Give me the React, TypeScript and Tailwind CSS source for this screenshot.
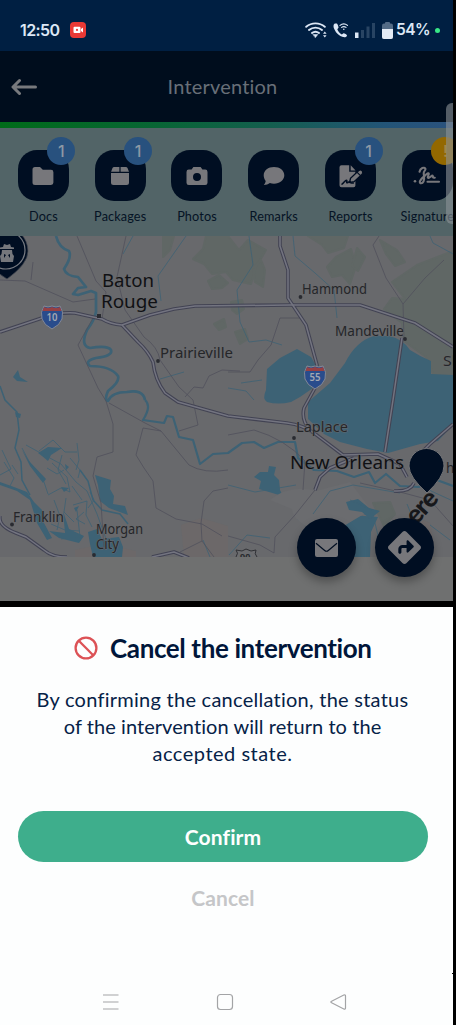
import React from "react";
import { FaDiamondTurnRight } from "react-icons/fa6";

const outfit = "font-[Lato,'Liberation_Sans',sans-serif]";

function StatusBar() {
  return (
    <div className="flex h-[51px] shrink-0 items-center bg-[#001f42] pt-[9px] text-[#dce7f5]">
      <div className="ml-[20px] w-[50px] font-[Inter,sans-serif] text-[16px] leading-[20px] font-semibold tracking-[-0.6px] whitespace-nowrap">12:50</div>
      <svg className="h-4 w-4" viewBox="0 0 16 16">
        <rect width="16" height="16" rx="4" fill="#e93935" />
        <rect x="3.5" y="4.7" width="7" height="6.4" rx="1" fill="#fff" />
        <path d="M11 7l2-1.6v5L11 8.9z" fill="#fff" />
        <circle cx="7" cy="7.9" r="1.1" fill="#e93935" />
      </svg>
      <svg className="ml-[219px] h-[18px] w-[71px]" viewBox="0 0 71 18" fill="none" stroke="#dce7f5" strokeWidth="1.9" strokeLinecap="round">
        <path d="M1.2 5.8c5.4-4.6 13.2-4.6 18.6 0M4 9c3.8-3.2 9.2-3.2 13 0M7 12c2.1-1.6 4.9-1.6 7 0" />
        <path d="M8.2 13.5h4.6l-2.3 3z" fill="#dce7f5" strokeWidth=".5" />
        <path d="M18 12.8l1.8-2.3 1.8 2.3zM18 14.2l1.8 2.3 1.8-2.3z" fill="#dce7f5" stroke="none" />
        <path d="M29.8 2.4c-1.8 1-1.6 3.4-.3 6.2 1.7 3.8 4.8 6.5 8.5 7.5 2.3.5 3.8-.4 4-1.7 0-.7-2.8-2.3-3.5-2.1l-1.7 1.2c-2-.9-3.8-3-4.5-5.2l1.2-1.5c.3-.8-1-4.1-1.7-4.4z" fill="#dce7f5" stroke="none" />
        <path d="M35 4.4c2.4-2.1 5.1-2.1 7.5 0M36.6 6.4c1.4-1.1 3-1.1 4.4 0" strokeWidth="1.2" />
        <circle cx="38.8" cy="8.2" r=".8" fill="#dce7f5" stroke="none" />
        <g stroke="none">
          <path d="M50 11.5h3.5V17H50z" fill="#dce7f5" />
          <path d="M56 9h3v8h-3zM61.5 5.5h3V17h-3zM67 2h3v15h-3z" fill="#284463" />
        </g>
      </svg>
      <svg className="ml-[6px] h-[17px] w-[11px]" viewBox="0 0 11 17">
        <rect x="3" width="5" height="4" rx="1" fill="#536b86" />
        <rect y="1.5" width="11" height="15.5" rx="2" fill="#536b86" />
        <path d="M0 7h11v8a2 2 0 01-2 2H2a2 2 0 01-2-2z" fill="#e3eaf4" />
      </svg>
      <div className="ml-[3px] w-[39px] font-[Inter,sans-serif] text-[15.5px] leading-[20px] font-semibold tracking-[-0.5px]">54%</div>
      <div className="h-[5px] w-[5px] rounded-full bg-[#38e886]" />
    </div>
  );
}

function Header() {
  return (
    <div className="grid h-[71px] shrink-0 grid-cols-[60px_1fr_68px] items-center bg-[#000d1d]">
      <svg className="ml-[11px] h-[18px] w-[27px]" viewBox="0 0 27 18" fill="none" stroke="#77797d" strokeWidth="3" strokeLinecap="round" strokeLinejoin="round">
        <path d="M24.5 9H2.5M8.5 2.5L2 9l6.5 6.5" />
      </svg>
      <div className={`${outfit} -mt-[2px] text-center text-[20px] tracking-[0.2px] text-[#686f78]`}>Intervention</div>
    </div>
  );
}

const glyph = "#77777b";

function FolderIcon() {
  return <svg className="h-6 w-6" viewBox="0 0 24 24"><path d="M1.5 5.5a2.5 2.5 0 012.5-2.5h5l2.8 2.8H20a2.4 2.4 0 012.4 2.4v10.4A2.4 2.4 0 0120 21H4a2.5 2.5 0 01-2.5-2.5z" fill={glyph} /></svg>;
}
function PackageIcon() {
  return <svg className="h-6 w-6" viewBox="0 0 24 24" fill={glyph}><path d="M6.2 3h5.2v4.8H3.1L4.5 4c.3-.7.9-1 1.7-1zM12.6 3h5.2c.8 0 1.4.3 1.7 1l1.5 3.8h-8.4zM3 9h18v9.5a2.5 2.5 0 01-2.5 2.5h-13A2.5 2.5 0 013 18.5z" /></svg>;
}
function CameraIcon() {
  return <svg className="h-6 w-6" viewBox="0 0 24 24"><path fillRule="evenodd" d="M8.4 3h7.2l1.8 2.6h2.8a2.3 2.3 0 012.3 2.3v10.8a2.3 2.3 0 01-2.3 2.3H3.8a2.3 2.3 0 01-2.3-2.3V7.9a2.3 2.3 0 012.3-2.3h2.8zM12 9.1a4 4 0 100 8 4 4 0 000-8z" fill={glyph} /></svg>;
}
function CommentIcon() {
  return <svg className="h-6 w-6" viewBox="0 0 24 24"><path d="M12 3c5.8 0 10.3 3.5 10.3 8.3s-4.5 8.4-10.3 8.4c-1.5 0-2.9-.2-4.1-.7-1.7 1.3-4.1 2.1-6.1 2 .9-1 1.6-2.4 1.9-4.1-1.3-1.5-2-3.4-2-5.6C1.7 6.5 6.2 3 12 3z" fill={glyph} /></svg>;
}
function ReportIcon() {
  return (
    <svg className="h-6 w-7" viewBox="0 0 28 24">
      <path d="M4.5 1.3h7.7v6.5h6.2v13.6a1.8 1.8 0 01-1.8 1.8H4.5a2 2 0 01-2-2V3.3a2 2 0 012-2z" fill={glyph} />
      <path d="M13.7 1.3l4.9 5.1h-4.9z" fill={glyph} />
      <path d="M12.6 18.5l.9-4.2 8-7.6q2-1.5 3.6 0 1.4 1.8 0 3.5l-8 7.5z" fill={glyph} stroke="#000e22" strokeWidth="1.3" />
      <path d="M19.9 8.1l3.6 3.6" stroke="#000e22" strokeWidth="1.2" />
      <path d="M5 20.2c1.7-1.1 3.2-4 4.4-4 1.3 0-.7 3 1 2.5l2-1c1.1-.5.6 1.4 2 1.4h2" fill="none" stroke="#000e22" strokeWidth="1.5" strokeLinecap="round" />
    </svg>
  );
}
function SignatureIcon() {
  return (
    <svg className="h-6 w-7" viewBox="0 0 28 24" fill="none" stroke={glyph} strokeWidth="2.1" strokeLinecap="round">
      <path d="M6.5 7.7c.7-3.5 4.9-5.2 5.9-3 .6 1.8-1.9 2-1.7 4.8.2 2.6 1.2 5.2-.2 8-1.2 2.3-3.8 2.4-3.7.4.2-2.8 4.6-5.4 7-8 1.2-1.1 2.5-.7 1.8.7-.8 1.8-1.4 3.8.2 3.3l3-2.1c1-.5 1.2.6 1.2 1.4.2.7 1 .6 1.8.5M14.5 17.8H26" />
      <circle cx="2" cy="17.2" r="1.3" fill={glyph} stroke="none" />
    </svg>
  );
}

const actions = [
  { label: "Docs", badge: "1", Icon: FolderIcon },
  { label: "Packages", badge: "1", Icon: PackageIcon },
  { label: "Photos", badge: "", Icon: CameraIcon },
  { label: "Remarks", badge: "", Icon: CommentIcon },
  { label: "Reports", badge: "1", Icon: ReportIcon },
  { label: "Signature", badge: "!", Icon: SignatureIcon },
];

function ActionBar() {
  return (
    <div className="relative h-[108px] shrink-0 overflow-hidden bg-[#526467]">
      <div className="ml-[5px] flex w-[462px] pt-[22px]">
        {actions.map(({ label, badge, Icon }) => (
          <div key={label} className="flex w-[76.8px] shrink-0 flex-col items-center">
            <div className="relative flex h-[51px] w-[51px] items-center justify-center rounded-[19px] bg-[#000e22]">
              <Icon />
              {badge && (
                <div className={`absolute top-[-13px] left-[29.5px] flex h-7 w-7 items-center justify-center rounded-full font-[Inter,sans-serif] text-[16px] font-medium ${badge === "!" ? "bg-[#936800] text-[#a08848]" : "bg-[#28517e] text-[#8c98a5]"}`}>{badge}</div>
              )}
            </div>
            <div className={`${outfit} mt-[6px] text-[12.7px] leading-[18px] tracking-[0.12px] whitespace-nowrap text-[#051325]`}>{label}</div>
          </div>
        ))}
      </div>
    </div>
  );
}

const highways = [
  "M0 332L42 318Q57 312 75 313L102 319Q110 324 122 325L150 315L174 309L195 306L290 305H360L415 323L453 347",
  "M122 325L138 342Q148 351 153 362Q155 380 165 393L178 402L228 416L287 423Q303 425 314 433L343 455L378 454L400 464L407 477",
  "M280 236V246L288 270V298L306 325L317 365L315 388L304 408Q301 420 310 430",
  "M402 338L393 400L385 452",
  "M0 516Q-2 526 16 533L26 537L44 550Q52 557 67 557M152 557L174 552L189 558M315 490L320 477L330 468L354 458M453 424L430 444L412 462M394 491Q410 492 414 483",
];
const minor = [
  "M77 236L96 281L106 292L102 319M126 236L117 277L125 310L144 337Q158 347 160 360L179 387L193 400L198 425L179 431",
  "M0 280L25 281L73 302L95 299M93 318L78 345L98 388L106 401L113 424L113 452L97 457L93 476L101 503L104 550M109 403L145 423L161 431L189 465Q204 474 228 470",
  "M161 431L143 428L136 455L144 468L153 481L156 508L176 519L202 524L222 536M228 488L213 491L204 501L201 523L202 541L214 557M202 541L180 552",
  "M228 372H250L258 360L271 345L280 318L300 318M404 339L403 304L386 278L373 245L379 236M403 304L425 278L444 260",
  "M228 536L260 545L274 553L275 537L295 515L315 490M228 435L254 430Q285 439 305 461L303 490M453 526L430 500L400 492L360 483",
  "M185 397L194 387L203 388L209 376L222 370L240 371M31 280L33 262",
];
const streams = [
  "M249 236L253 265L237 290L240 322L249 342L266 340L282 345M293 236L295 256L315 273L334 290L337 318",
  "M22 448L31 465L44 482L48 494",
  "M26 445L46 456L61 464L76 482L87 491L97 514L110 550",
  "M39 451L53 440L65 452L77 452M52 463L67 477L70 492L61 488L48 495M73 505L87 501L86 515L92 527M51 524L65 530L80 531M77 510L80 537L61 539M2 450L11 469L0 475M12 465L18 474",
  "M62 455L58 470L66 484M70 458L80 470L78 478M54 500L60 516L57 530M66 498L64 512L74 522M84 512L76 519L85 524M72 486L82 500M47 468L57 474L64 470M77 443L79 460L76 470M4 462L14 478L10 486M88 508L94 500L90 492",
  "M186 236L158 276L161 301M133 236L123 254M184 372L160 379M430 236L433 243L455 255M203 540L210 557M228 485L255 492L296 485M313 514L330 491L353 485L400 493",
  "M229 555L247 535L270 538M418 474L431 491L453 501M350 500L372 510L379 540M407 504L416 526L423 556M430 525L450 540M241 383L262 380M228 388L246 391L254 400",
];

const labels = [
  { x: 102, y: 287, w: 52, size: 18.5, text: "Baton", ink: "#101114" },
  { x: 101, y: 308, w: 57, size: 18.5, text: "Rouge", ink: "#101114" },
  { x: 160, y: 358, w: 73, size: 13.5, text: "Prairieville", ink: "#252629" },
  { x: 302, y: 294, w: 65, size: 13.5, text: "Hammond", ink: "#252629" },
  { x: 335, y: 336, w: 69, size: 13.5, text: "Mandeville", ink: "#252629" },
  { x: 443, y: 366, w: 17, size: 14, text: "Sli", ink: "#252629" },
  { x: 296, y: 432, w: 52, size: 13.5, text: "Laplace", ink: "#252629" },
  { x: 290, y: 469, w: 114, size: 18, text: "New Orleans", ink: "#101114" },
  { x: 446, y: 473, w: 16, size: 13.5, text: "ha", ink: "#252629" },
  { x: 13, y: 522, w: 51, size: 13.5, text: "Franklin", ink: "#252629" },
  { x: 96, y: 534, w: 47, size: 13.5, text: "Morgan", ink: "#252629" },
  { x: 96, y: 549, w: 23, size: 13.5, text: "City", ink: "#252629" },
];

function Shield({ x, y, text }: { x: number; y: number; text: string }) {
  return (
    <g transform={`translate(${x} ${y})`}>
      <path d="M-8-11Q-4-9 0-11Q4-9 8-11Q12-5 10 2Q8 8 0 12Q-8 8-10 2Q-12-5-8-11Z" fill="#294c8c" stroke="#868a95" />
      <path d="M-8-10Q-4-8 0-10Q4-8 8-10L9.5-6H-9.5Z" fill="#964044" />
      <text y="4.2" textAnchor="middle" textLength="11" lengthAdjust="spacingAndGlyphs" fontFamily="Noto Sans" fontWeight="600" fontSize="10" fill="#a2a8b3">{text}</text>
    </g>
  );
}

function MapView() {
  return (
    <svg className="block h-[321px] w-[453px]" viewBox="0 236 453 321">
      <rect y="236" width="453" height="321" fill="#68696c" />
      <g fill="#5b6661" stroke="#5b6661" strokeWidth="2" strokeLinejoin="round" opacity=".6">
        <path d="M163 236h11l-4 14-7 7zM206 236h22l11 14 9-10 18 10-10 17-5 17-18-4-7-8-14 2-8-10-11-5 10-10zM208 281l11-6 9 8-6 5-10 1zM231 302l11-2 2 9-7 5-5-4zM214 324l10-5 2 8-7 3zM308 236h40l-4 12-16 5-6-8zM336 257l15-8 5 17-6 18-8-9-10 2-5-10zM380 240l17 10 8 12-10 4-9-12zM253 268l8-8 4 10-2 17-8-5zM235 332l10-3 3 10-8 5z" />
        <path d="M392 282l25-17 36-14v123h-20l-7-17-22-16-2-18-18-14 8-11 13 1zM373 503l17-1 5 12-11 12zM357 248l8 9-7 14-6-5z" />
      </g>
      <g fill="#706866" opacity=".5">
        <path d="M181 525l20-7 27 8v31h-44zM75 550l28-6 33 7v6H75zM410 515l20 8 4 20-22-5z" />
      </g>
      <g fill="#3d6275">
        <path d="M345 363Q356 341 374 336H389Q403 339 410 350Q421 357 431 361V374L453 375V425L438 441L420 444L388 453L367 449L340 442L324 434L308 419V402L330 383Z" />
        <path d="M267 369L280 358L297 349L311 357L320 372L313 388L300 397L291 402Q278 405 267 402Q262 399 266 390Z" />
        <path d="M95 475L111 480L110 489L114 496L113 504L125 506L128 515L109 508L100 501L98 485Z" />
        <path d="M88 532L97 529L102 539L119 537L123 547L122 557H93L90 544ZM297 519L312 517L326 527L340 525L351 515L378 517L371 532L370 557H310L313 532Z" />
        <path d="M254 477L260 472L268 472L269 466L276 467L274 475L279 480L280 490L286 502L279 495L259 489L261 481ZM345 503L357 498L369 509L379 511L366 515L354 510Z" />
      </g>
      <path d="M270 500Q290 484 316 491L350 482L371 510Q350 522 336 531L323 521L312 530Q292 519 292 509Z" fill="#6b6c6f" />
      <g fill="#3d6275">
        <path d="M346 502L358 499L369 508L380 511L370 519L362 512L349 510ZM13 377L18 370L20 377L28 382L17 381ZM15 412L21 414L20 418L16 417ZM38 453L48 447L62 448L51 455L48 461L42 456ZM22 450L29 461L46 479L43 483L30 466ZM0 482L14 487L27 492L34 502L42 510L44 523L52 538L47 540L37 523L30 500L17 491L0 485ZM61 487L69 488L64 492ZM63 511L69 529L84 536L79 543L59 538L49 531L65 533ZM65 464L69 467L66 470ZM74 508L79 506L76 512Z" />
      </g>
      <g fill="none" stroke="#3d6275" strokeWidth=".8">
        {streams.map((d) => <path key={d} d={d} />)}
      </g>
      <g fill="none" stroke="#3d6275" strokeWidth="1.5">
        <path d="M0 386L5 400L17 412L19 430L15 448L21 462L22 480L30 495M80 470L88 481L93 500L102 510L120 514L128 524" />
      </g>
      <g fill="none" stroke="#3d6275" strokeWidth="2.7" strokeLinejoin="round">
        <path d="M56 236Q59 248 69 251Q72 257 64 269Q66 276 78 277L86 287L78 288L73 294L78 295L91 291L96 293L96 312Q94 321 87 330Q80 346 90 348Q108 345 111 350Q113 356 96 358Q84 361 90 366Q111 366 118 376Q120 382 108 391Q104 400 108 401Q112 392 127 392Q143 389 145 400" />
        <path d="M145 400Q152 406 143 420L164 423L167 416L173 417L179 437L193 440L200 464L213 454L228 453L242 443L254 442L264 448L278 442H295L298 458L314 470L337 471L354 477L369 472L375 483L386 474L400 486L419 487L426 476L453 486" strokeWidth="2.2" />
      </g>
      <g fill="none" stroke="#51515c" strokeWidth=".8">
        {minor.map((d) => <path key={d} d={d} />)}
      </g>
      <g fill="none" stroke="#424353" strokeWidth="3.6" strokeLinejoin="round">
        {highways.map((d) => <path key={d} d={d} />)}
      </g>
      <g fill="none" stroke="#737480" strokeWidth="1.5" strokeLinejoin="round">
        {highways.map((d) => <path key={d} d={d} />)}
      </g>
      <g fill="#292b31">
        <path d="M97 314h4v4h-4z" />
        {[[158, 361], [300.5, 297], [405, 339], [294, 438], [12, 524.5], [94, 555]].map(([x, y]) => <circle key={x} cx={x} cy={y} r="1.9" />)}
      </g>
      <g fontFamily="Noto Sans, Open Sans, sans-serif" stroke="#68696c" strokeWidth="1" paintOrder="stroke">
        {labels.map((l) => <text key={l.text} x={l.x} y={l.y} textLength={l.w} lengthAdjust="spacingAndGlyphs" fontSize={l.size} fill={l.ink}>{l.text}</text>)}
      </g>
      <Shield x={52} y={317} text="10" />
      <Shield x={315} y={377} text="55" />
      <path d="M236 557q3-4 0-7l6 1 4-2 5 2 5-1q-2 4 1 7" fill="#6b6c6f" stroke="#303135" />
      <text x="240" y="560" fontFamily="Noto Sans" fontWeight="700" fontSize="9" fill="#292b2e">90</text>
      <text transform="translate(407 536) rotate(-48)" fontFamily="Lato" fontWeight="900" fontSize="26" letterSpacing="-1" fill="#17181b">here</text>
      <path d="M427 493Q409 477 409 466A17.5 17.5 0 01444 466Q444 477 427 493Z" fill="#000e22" stroke="#737477" />
      <path d="M7 279Q-20 262-20 251A24 24 0 0128 251Q28 264 7 279Z" fill="#000e22" stroke="#4a4f58" strokeWidth=".7" />
      <circle cx="6" cy="250" r="19" fill="none" stroke="#777b82" strokeWidth="1.2" />
      <path d="M3 247l1-3 3 1 3-1 1 3 3 .6v1.4H0v-1.4zM2 250h10l.5 4 1.5 2-1 6H1l-1-6 1.500-2zM4 254v4l2-3zM10 254l-2 1 2 3z" fill="#75777c" fillRule="evenodd" />
    </svg>
  );
}

function MailIcon() {
  return <svg className="h-[18px] w-[23px]" viewBox="0 0 23 18"><rect width="23" height="18" rx="2" fill="#77777b" /><path d="M1 4.2L9.7 11.5q1.8 1.5 3.6 0L22 4.2" fill="none" stroke="#000e22" strokeWidth="1.2" /></svg>;
}

function FloatingActions() {
  return (
    <div className="absolute top-[282px] left-[297px] flex gap-[19px]">
      <button className="flex h-[59px] w-[59px] items-center justify-center rounded-full bg-[#000e22] shadow-[0_5px_9px_rgba(0,0,0,0.28)]"><MailIcon /></button>
      <button className="flex h-[59px] w-[59px] items-center justify-center rounded-full bg-[#000e22] text-[33px] text-[#77777b] shadow-[0_5px_9px_rgba(0,0,0,0.28)]"><FaDiamondTurnRight /></button>
    </div>
  );
}

function CancelSheet() {
  return (
    <div className={`${outfit} flex h-[418px] shrink-0 flex-col bg-[#fdfefe]`}>
      <div className="mt-[24px] flex h-[34px] items-center pl-[74px] text-[#00163a]">
        <svg className="h-6 w-6" viewBox="0 0 24 24" fill="none" stroke="#dc5256" strokeWidth="2.3"><circle cx="12" cy="12" r="10.4" /><path d="M4.8 4.8l14.4 14.4" /></svg>
        <h1 className="ml-[12px] text-[26px] leading-[34px] font-bold tracking-[-0.38px] whitespace-nowrap">Cancel the intervention</h1>
      </div>
      <p className="mt-[21px] w-[445px] text-center text-[20px] leading-[27px] text-[#062247]">
        <span className="tracking-[0.26px]">By confirming the cancellation, the status</span><br />
        <span className="tracking-[0.06px]">of the intervention will return to the</span><br />
        <span className="tracking-[0.5px]">accepted state.</span>
      </p>
      <button className="mt-[44px] ml-[18px] h-[51px] w-[410px] rounded-full bg-[#3eae8c] text-[21px] font-bold tracking-[0.1px] text-white">Confirm</button>
      <button className="mt-[19px] ml-[18px] h-[34px] w-[410px] text-[21px] font-bold tracking-[0.1px] text-[#c5c6c8]">Cancel</button>
      <div className="mt-[78px] flex h-[18px] items-center">
        <svg className="ml-[102px] h-[18px] w-[245px]" viewBox="0 0 245 18" fill="none" stroke="#a3a4a6" strokeWidth="1.2">
          <path d="M1 2h15.5M1 9h15.5M1 16h15.5" />
          <rect x="115.5" y="1.5" width="15" height="15" rx="3" />
          <path d="M229.6 8.2L241.8 2q1.7-.7 1.7 1v12q0 1.7-1.7 1l-12.2-6.2q-1.5-.8 0-1.6z" />
        </svg>
      </div>
    </div>
  );
}

export default function App() {
  return (
    <div className="relative h-[1025px] w-[456px] overflow-hidden bg-black">
      <div className="flex h-full w-[453px] flex-col overflow-hidden">
        <StatusBar />
        <Header />
        <div className="h-[6px] shrink-0 bg-[linear-gradient(to_right,#006b19,#086535_35%,#145e4f_60%,#235477_85%,#2b527d)]" />
        <ActionBar />
        <div className="relative h-[365px] shrink-0 bg-[#6f7070]">
          <MapView />
          <FloatingActions />
        </div>
        <div className="h-[6px] shrink-0 bg-black" />
        <CancelSheet />
      </div>
      <div className="absolute top-[103px] left-[446px] h-[121px] w-[7px] rounded-l-[6px] bg-[#8c9398]/60" />
      <div className="absolute top-[973px] left-[452px] h-px w-1 bg-black" />
    </div>
  );
}
